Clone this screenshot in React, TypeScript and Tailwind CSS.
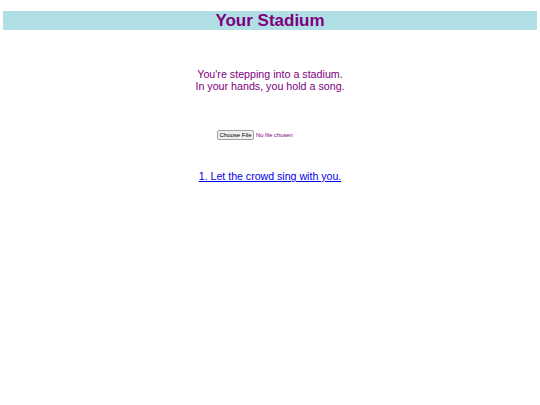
export default function App() {
  return (
    <div className="min-h-[405px] bg-white pt-[11px] font-['Liberation_Sans',Arial,sans-serif] text-[#800080]">
      <header className="mx-[3px] flex h-[19px] items-center justify-center bg-[#b0e0e6]">
        <h1 className="text-[17px] font-bold leading-none">Your Stadium</h1>
      </header>

      <main className="flex flex-col items-center">
        <p className="mt-[38px] text-center text-[10.7px] leading-[12px]">
          You're stepping into a stadium.
          <br />
          In your hands, you hold a song.
        </p>

        <div className="mt-[38px] flex w-full pl-[217px]">
          <input
            type="file"
            className="w-[80px] text-[5.8px] text-[#800080] file:mr-[2px] file:h-[10px] file:rounded-[2px] file:border file:border-[#a0a0a0] file:bg-[#efefef] file:px-[1.5px] file:text-[6px] file:leading-none file:text-black"
          />
        </div>

        <a href="#" className="mt-[30px] text-[10.6px] leading-[12px] text-[#0000ee] underline">
          1. Let the crowd sing with you.
        </a>
      </main>
    </div>
  );
}
